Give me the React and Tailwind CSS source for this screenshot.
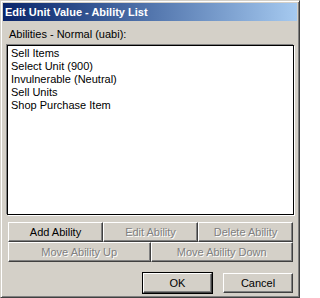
import React from "react";

const abilities = [
  "Sell Items",
  "Select Unit (900)",
  "Invulnerable (Neutral)",
  "Sell Units",
  "Shop Purchase Item",
];

function WinButton({ label, disabled, isDefault, className = "" }) {
  const base =
    "flex items-center justify-center h-[20px] bg-[#d4d0c8] border border-t-white border-l-white border-r-[#404040] border-b-[#404040] shadow-[inset_-1px_-1px_0_#808080]";
  const text = disabled
    ? "text-[#808080] [text-shadow:1px_1px_0_#ffffff]"
    : "text-black";
  return (
    <div
      className={`${isDefault ? "outline outline-1 outline-black" : ""} ${className}`}
    >
      <div className={`${base} ${text}`}>{label}</div>
    </div>
  );
}

export default function App() {
  return (
    <div
      className="w-[300px] h-[298px] bg-[#d4d0c8] border border-t-[#d4d0c8] border-l-[#d4d0c8] border-r-[#404040] border-b-[#404040] shadow-[inset_1px_1px_0_#ffffff,inset_-1px_-1px_0_#808080] p-[2px] flex flex-col text-[11px] text-black"
      style={{ fontFamily: '"Liberation Sans", Arial, sans-serif' }}
    >
      {/* title bar */}
      <div className="h-[18px] flex items-center pl-[2px] bg-gradient-to-r from-[#0a246a] to-[#a6caf0] text-white font-bold text-[11px] leading-none">
        Edit Unit Value - Ability List
      </div>

      <div className="flex flex-col pl-[4px] pr-[3px]">
        <div className="mt-[7px] ml-[2px] leading-[13px]">
          Abilities - Normal (uabi):
        </div>

        <div className="mt-[4px] h-[170px] bg-white border border-black shadow-[-1px_-1px_0_#808080,1px_1px_0_#ffffff] pl-[3px] pt-[1px] leading-[13px]">
          {abilities.map((a) => (
            <div key={a}>{a}</div>
          ))}
        </div>

        <div className="mt-[7px] ml-[1px] mr-[1px] grid grid-cols-3">
          <WinButton label="Add Ability" />
          <WinButton label="Edit Ability" disabled />
          <WinButton label="Delete Ability" disabled />
        </div>
        <div className="ml-[1px] mr-[1px] grid grid-cols-2">
          <WinButton label="Move Ability Up" disabled />
          <WinButton label="Move Ability Down" disabled />
        </div>

        <div className="mt-[11px] flex justify-end gap-[11px] mr-[1px]">
          <WinButton label="OK" isDefault className="w-[69px]" />
          <WinButton label="Cancel" className="w-[70px]" />
        </div>
      </div>
    </div>
  );
}
